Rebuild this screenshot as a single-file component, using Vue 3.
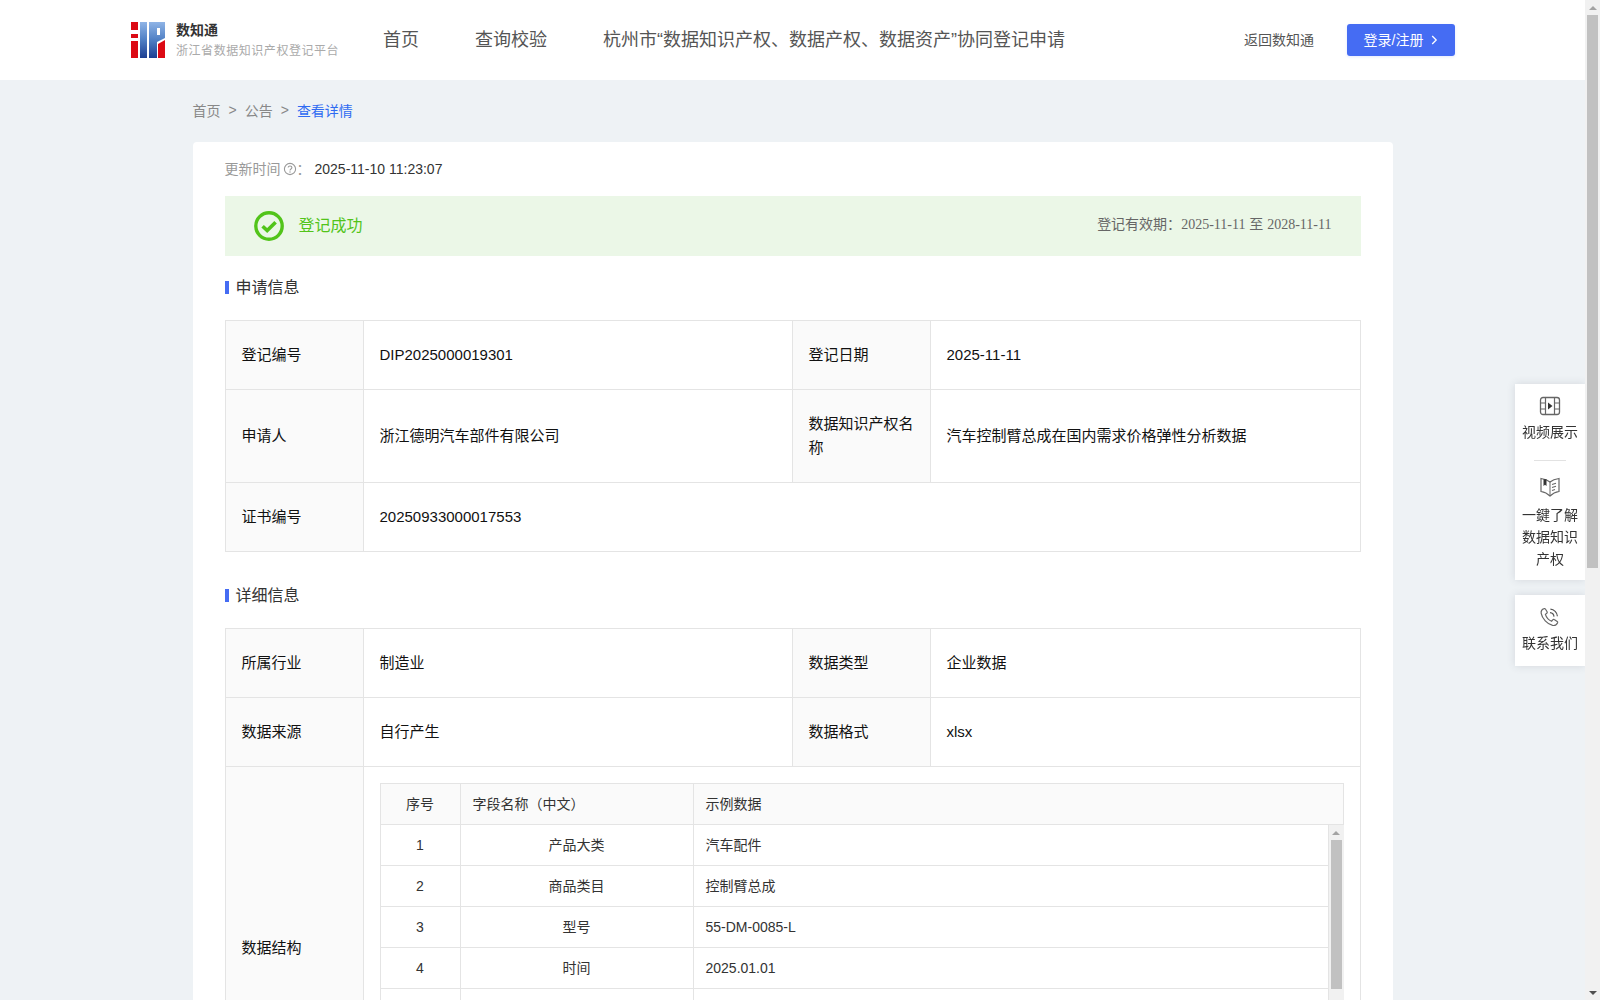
<script setup>
import { ref } from 'vue'

const topNav = ref(['首页', '查询校验', '杭州市“数据知识产权、数据产权、数据资产”协同登记申请'])

const fieldRows = ref([
  { no: 1, name: '产品大类', sample: '汽车配件' },
  { no: 2, name: '商品类目', sample: '控制臂总成' },
  { no: 3, name: '型号', sample: '55-DM-0085-L' },
  { no: 4, name: '时间', sample: '2025.01.01' },
  { no: '', name: '', sample: '' }
])
</script>

<template>
  <div class="page">
    <header class="header">
      <div class="brand">
        <svg class="logo" width="34" height="36" viewBox="0 0 34 36">
          <defs>
            <linearGradient id="logoBlue" x1="0" y1="0" x2="0" y2="1">
              <stop offset="0" stop-color="#8fb4e6" />
              <stop offset="0.5" stop-color="#4f7fc4" />
              <stop offset="1" stop-color="#1d3f92" />
            </linearGradient>
          </defs>
          <rect x="0" y="0" width="7" height="8" fill="#dc0a14" />
          <rect x="0" y="12" width="7" height="4" fill="#dc0a14" />
          <rect x="0" y="19" width="7" height="17" fill="#dc0a14" />
          <rect x="9" y="0" width="7" height="36" fill="url(#logoBlue)" />
          <path d="M18 0H34V16L26 20V36H18Z" fill="url(#logoBlue)" />
          <rect x="26" y="6" width="3" height="7" fill="#fff" />
          <path d="M27 22L34 18V36H27Z" fill="#dc0a14" />
        </svg>
        <div class="brand-text">
          <div class="brand-name">数知通</div>
          <div class="brand-sub">浙江省数据知识产权登记平台</div>
        </div>
      </div>
      <nav class="nav">
        <a v-for="item in topNav" :key="item" class="nav-item">{{ item }}</a>
      </nav>
      <div class="header-right">
        <a class="back-link">返回数知通</a>
        <button class="login-btn">
          <span>登录/注册</span>
          <svg width="7" height="10" viewBox="0 0 7 10"><path d="M1.2 1L5.2 5L1.2 9" fill="none" stroke="#fff" stroke-width="1.3" /></svg>
        </button>
      </div>
    </header>

    <main class="main">
      <div class="breadcrumb">
        <span>首页</span>
        <i>&gt;</i>
        <span>公告</span>
        <i>&gt;</i>
        <span class="current">查看详情</span>
      </div>

      <section class="card">
        <div class="update-row">
          <span class="update-label">更新时间</span>
          <svg class="help" width="14" height="14" viewBox="0 0 14 14">
            <circle cx="7" cy="7" r="5.6" fill="none" stroke="#999" stroke-width="1.1" />
            <path d="M5.2 5.6C5.2 3.4 8.9 3.5 8.9 5.6C8.9 7 7 6.9 7 8.4" fill="none" stroke="#999" stroke-width="1.1" />
            <circle cx="7" cy="10" r="0.7" fill="#999" />
          </svg>
          <span class="update-label">：</span>
          <span class="update-value">2025-11-10 11:23:07</span>
        </div>

        <div class="status">
          <div class="status-left">
            <svg width="30" height="30" viewBox="0 0 30 30">
              <circle cx="15" cy="15" r="13.2" fill="none" stroke="#52c41a" stroke-width="3.4" />
              <path d="M8.6 15.2L13.2 19.6L21.6 11.2" fill="none" stroke="#52c41a" stroke-width="3.6" />
            </svg>
            <span>登记成功</span>
          </div>
          <div class="status-right">登记有效期：<em>2025-11-11</em> 至 <em>2028-11-11</em></div>
        </div>

        <h3 class="section-title">申请信息</h3>
        <table class="info-table">
          <colgroup>
            <col class="col-label" />
            <col class="col-value" />
            <col class="col-label" />
            <col />
          </colgroup>
          <tbody>
            <tr>
              <th>登记编号</th>
              <td>DIP2025000019301</td>
              <th>登记日期</th>
              <td>2025-11-11</td>
            </tr>
            <tr>
              <th>申请人</th>
              <td>浙江德明汽车部件有限公司</td>
              <th>数据知识产权名称</th>
              <td>汽车控制臂总成在国内需求价格弹性分析数据</td>
            </tr>
            <tr>
              <th>证书编号</th>
              <td colspan="3">20250933000017553</td>
            </tr>
          </tbody>
        </table>

        <h3 class="section-title second">详细信息</h3>
        <table class="info-table">
          <colgroup>
            <col class="col-label" />
            <col class="col-value" />
            <col class="col-label" />
            <col />
          </colgroup>
          <tbody>
            <tr>
              <th>所属行业</th>
              <td>制造业</td>
              <th>数据类型</th>
              <td>企业数据</td>
            </tr>
            <tr>
              <th>数据来源</th>
              <td>自行产生</td>
              <th>数据格式</th>
              <td>xlsx</td>
            </tr>
            <tr>
              <th>数据结构</th>
              <td colspan="3" class="structure-cell">
                <table class="field-table field-head">
                  <colgroup>
                    <col class="col-no" />
                    <col class="col-name" />
                    <col />
                  </colgroup>
                  <thead>
                    <tr>
                      <th class="center">序号</th>
                      <th>字段名称（中文）</th>
                      <th>示例数据</th>
                    </tr>
                  </thead>
                </table>
                <div class="field-body">
                  <div class="field-scroll">
                    <table class="field-table">
                      <colgroup>
                        <col class="col-no" />
                        <col class="col-name" />
                        <col />
                      </colgroup>
                      <tbody>
                        <tr v-for="(row, i) in fieldRows" :key="i">
                          <td class="center">{{ row.no }}</td>
                          <td class="center">{{ row.name }}</td>
                          <td>{{ row.sample }}</td>
                        </tr>
                      </tbody>
                    </table>
                  </div>
                  <div class="inner-bar">
                    <div class="bar-btn"><span class="arrow-up"></span></div>
                    <div class="inner-thumb"></div>
                  </div>
                </div>
              </td>
            </tr>
          </tbody>
        </table>
      </section>
    </main>

    <aside class="side">
      <div class="side-box first">
        <a class="side-item">
          <svg width="22" height="20" viewBox="0 0 22 20">
            <rect x="1.5" y="1.5" width="19" height="17" rx="2.5" fill="none" stroke="#666" stroke-width="1.3" />
            <path d="M6.5 1.5V18.5M15.5 1.5V18.5M1.5 7H6.5M1.5 13H6.5M15.5 7H20.5M15.5 13H20.5" fill="none" stroke="#666" stroke-width="1.2" />
            <path d="M9 6.5L13.5 10L9 13.5Z" fill="#333" />
          </svg>
          <span>视频展示</span>
        </a>
        <div class="side-line"></div>
        <a class="side-item book">
          <svg width="22" height="20" viewBox="0 0 22 20">
            <path d="M11 5C8.5 3 5.5 2 2 1.5V14.5C5.5 15 8.5 16.5 11 19C13.5 16.5 16.5 15 20 14.5V1.5C16.5 2 13.5 3 11 5Z" fill="none" stroke="#666" stroke-width="1.2" />
            <path d="M11 5V19" fill="none" stroke="#666" stroke-width="1" />
            <path d="M4.5 2.2H7.5V9L6 7.8L4.5 9Z" fill="#333" />
            <path d="M13 7.5L17 6.3M13 10.5L17 9.3M13 13.5L16 12.5" fill="none" stroke="#666" stroke-width="1.1" />
          </svg>
          <span>一鍵了解数据知识产权</span>
        </a>
      </div>
      <div class="side-box contact">
        <a class="side-item">
          <svg width="22" height="20" viewBox="0 0 22 20">
            <path d="M5.2 1.6C3.2 2.2 1.8 4 2.2 6.4C3 11.4 8.4 17.4 13.6 18.4C16 18.8 17.8 17.8 18.6 15.8C18.8 15.2 18.6 14.8 18.2 14.5L15.2 12.6C14.6 12.2 14.1 12.4 13.7 12.9L12.6 14.2C10 13.2 7.2 10 6.4 7.4L7.8 6.3C8.3 5.9 8.4 5.4 8.1 4.8L6.4 2C6.1 1.6 5.7 1.4 5.2 1.6Z" fill="none" stroke="#666" stroke-width="1.2" />
            <path d="M11 5.6C13.2 5.8 14.8 7.4 15 9.6" fill="none" stroke="#555" stroke-width="1.2" />
            <path d="M11.4 2.2C15 2.4 18.2 5.4 18.4 9.2" fill="none" stroke="#555" stroke-width="1.2" />
          </svg>
          <span>联系我们</span>
        </a>
      </div>
    </aside>

    <div class="page-bar">
      <div class="bar-btn"><span class="arrow-up"></span></div>
      <div class="page-thumb"></div>
      <div class="bar-btn bottom"><span class="arrow-down"></span></div>
    </div>
  </div>
</template>

<style>
body {
  margin: 0;
  background: #eef2f5;
}
</style>

<style scoped>
.page {
  width: calc(100% - 15px);
  min-height: 1754px;
  background: #eef2f5;
  font-family: "Liberation Sans", "Noto Sans CJK SC", sans-serif;
  color: #222;
}

.header {
  display: flex;
  align-items: center;
  height: 80px;
  padding: 0 130px 0 131px;
  background: #fff;
}

.brand {
  display: flex;
  align-items: center;
  width: 252px;
  flex-shrink: 0;
}

.logo {
  flex-shrink: 0;
  margin-right: 11px;
}

.brand-name {
  margin-bottom: 1px;
  font-size: 14px;
  font-weight: 700;
  line-height: 20px;
  color: #333;
}

.brand-sub {
  font-size: 12px;
  letter-spacing: 0.55px;
  line-height: 20px;
  color: #aaa;
  white-space: nowrap;
}

.nav {
  display: flex;
  gap: 56px;
  padding-bottom: 4px;
  font-size: 18px;
  color: #555;
  white-space: nowrap;
}

.header-right {
  display: flex;
  align-items: center;
  gap: 33px;
  margin-left: auto;
}

.back-link {
  padding-bottom: 3px;
  font-size: 14px;
  color: #555;
}

.login-btn {
  display: flex;
  align-items: center;
  justify-content: center;
  gap: 8px;
  width: 108px;
  height: 32px;
  padding: 0;
  border: none;
  border-radius: 3px;
  background: #456cf3;
  box-shadow: 0 1px 3px rgba(69, 108, 243, 0.15);
  color: #fff;
  font-family: inherit;
  font-size: 14px;
}

.login-btn span {
  padding-bottom: 3px;
}

.main {
  width: 1200px;
  margin: 0 auto;
}

.breadcrumb {
  display: flex;
  align-items: center;
  gap: 8px;
  height: 60px;
  padding-bottom: 2px;
  font-size: 14px;
  color: #888;
}

.breadcrumb i {
  font-style: normal;
}

.breadcrumb .current {
  color: #2f6bf2;
}

.card {
  padding: 16px 32px 32px;
  border-radius: 4px;
  background: #fff;
}

.update-row {
  display: flex;
  align-items: center;
  height: 22px;
  margin-bottom: 16px;
  font-size: 14px;
}

.update-label {
  padding-bottom: 3px;
  color: #999;
}

.help {
  margin-left: 2px;
}

.update-value {
  margin-left: 4px;
  color: #333;
}

.status {
  display: flex;
  align-items: center;
  justify-content: space-between;
  height: 60px;
  padding: 0 29px 0 29px;
  background: #ebf7e7;
}

.status-left {
  display: flex;
  align-items: center;
  gap: 15px;
  font-size: 16px;
  color: #52c41a;
}

.status-left span {
  padding-bottom: 5px;
}

.status-right {
  padding-bottom: 6px;
  font-size: 14px;
  color: #666;
}

.status-right em {
  font-family: "Liberation Serif", "Noto Sans CJK SC", serif;
  font-style: normal;
}

.section-title {
  display: flex;
  align-items: center;
  height: 28px;
  margin: 16px 0 18px;
  padding-bottom: 2px;
  font-size: 16px;
  font-weight: 400;
  color: #333;
}

.section-title::before {
  content: "";
  width: 4px;
  height: 13px;
  margin: 3px 7px 0 0;
  background: #456cf3;
}

.section-title.second {
  margin-top: 28px;
}

.info-table {
  width: 100%;
  table-layout: fixed;
  border-collapse: collapse;
  font-size: 15px;
  line-height: 24px;
}

.col-label {
  width: 138px;
}

.col-value {
  width: 429px;
}

.info-table > tbody > tr > th,
.info-table > tbody > tr > td {
  padding: 22px 16px;
  border: 1px solid #e4e4e4;
  color: #111;
  font-weight: 400;
  text-align: left;
}

.info-table > tbody > tr > th {
  background: #fafafa;
}

.info-table > tbody > tr > td.structure-cell {
  padding: 16px;
}

.field-table {
  width: 100%;
  table-layout: fixed;
  border-collapse: collapse;
  font-size: 14px;
  line-height: 20px;
}

.col-no {
  width: 80px;
}

.col-name {
  width: 233px;
}

.field-table th,
.field-table td {
  height: 39px;
  padding: 0 12px 1px;
  border: 1px solid #e4e4e4;
  color: #333;
  font-weight: 400;
  text-align: left;
}

.field-table th {
  background: #fafafa;
}

.field-table .center {
  text-align: center;
}

.field-body {
  display: flex;
  height: 286px;
  border-bottom: 1px solid #e4e4e4;
}

.field-scroll {
  flex: 1;
  min-width: 0;
  overflow: hidden;
}

.field-scroll tr:first-child td {
  border-top: none;
}

.field-scroll td:last-child {
  border-right: none;
}

.inner-bar {
  flex-shrink: 0;
  width: 15px;
  border-left: 1px solid #e4e4e4;
  background: #f1f1f1;
}

.inner-thumb {
  width: 11px;
  height: 149px;
  margin: 0 auto;
  background: #c1c1c1;
}

.bar-btn {
  display: flex;
  align-items: center;
  justify-content: center;
  height: 15px;
}

.arrow-up {
  border-right: 4px solid transparent;
  border-bottom: 4px solid #a3a3a3;
  border-left: 4px solid transparent;
}

.arrow-down {
  border-top: 4px solid #505050;
  border-right: 4px solid transparent;
  border-left: 4px solid transparent;
}

.page-bar {
  position: fixed;
  top: 0;
  right: 0;
  bottom: 0;
  display: flex;
  flex-direction: column;
  width: 15px;
  background: #f1f1f1;
}

.page-thumb {
  width: 11px;
  height: 553px;
  margin: 0 auto;
  background: #c1c1c1;
}

.bar-btn.bottom {
  margin-top: auto;
}

.side {
  position: fixed;
  top: 384px;
  right: 15px;
  display: flex;
  flex-direction: column;
  gap: 15px;
  width: 70px;
}

.side-box {
  padding: 12px 6px 12px;
  background: #fff;
  box-shadow: 0 0 8px rgba(60, 70, 90, 0.15);
}

.side-box.first {
  padding-bottom: 10px;
}

.side-item {
  display: flex;
  flex-direction: column;
  align-items: center;
  gap: 5px;
  font-size: 14px;
  line-height: 22px;
  color: #333;
  text-align: center;
}

.side-item.book {
  gap: 7px;
  margin-top: 2px;
}

.side-line {
  width: 32px;
  height: 1px;
  margin: 17px auto 16px;
  background: #e2e2e2;
}
</style>
